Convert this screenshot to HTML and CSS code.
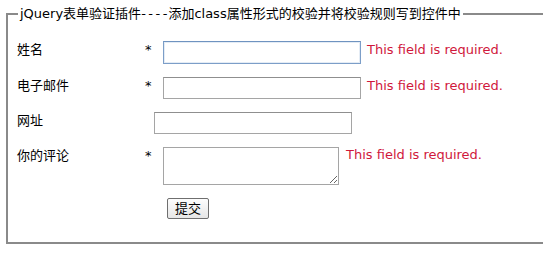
FILE: index.html
```html
<!DOCTYPE html>
<html lang="zh">
<head>
<meta charset="utf-8">
<title>jQuery表单验证插件</title>
<link rel="stylesheet" href="styles.css">
</head>
<body>
<form class="form">
  <fieldset class="box">
    <legend class="box-title">jQuery表单验证插件<span class="dash">----</span>添加class属性形式的校验并将校验规则写到控件中</legend>
    <div class="row">
      <label class="label">姓名</label>
      <em class="star">*</em>
      <input class="field field-focus" type="text">
      <span class="error">This field is required.</span>
    </div>
    <div class="row">
      <label class="label">电子邮件</label>
      <em class="star">*</em>
      <input class="field" type="text">
      <span class="error">This field is required.</span>
    </div>
    <div class="row">
      <label class="label">网址</label>
      <input class="field" type="text">
    </div>
    <div class="row">
      <label class="label">你的评论</label>
      <em class="star">*</em>
      <textarea class="area"></textarea>
      <span class="error">This field is required.</span>
    </div>
    <div class="row row-submit">
      <button class="submit" type="button">提交</button>
    </div>
  </fieldset>
</form>
</body>
</html>
```

FILE: styles.css
```css
html, body {
  margin: 0;
  padding: 0;
  background: #ffffff;
  overflow: hidden;
}

body {
  font-family: "DejaVu Sans", "Noto Sans CJK SC", sans-serif;
  font-size: 13px;
  line-height: 16px;
  color: #000000;
}

.form {
  margin: 0;
  padding: 6px 0 0 6px;
}

.box {
  margin: 0;
  padding: 19px 10px 23px 9px;
  border: 2px solid #8a8a8a;
  border-right: none;
  min-width: 0;
}

.box-title {
  padding: 0 2px;
  margin-left: 1px;
  line-height: 16px;
  font-size: 13px;
  white-space: nowrap;
}

.dash {
  letter-spacing: 2.5px;
  margin-right: -1.5px;
}

.row {
  display: flex;
  align-items: flex-start;
  margin-bottom: 13px;
}

.label,
.star,
.error {
  margin-top: 1px;
  line-height: 16px;
}

.label {
  width: 127px;
  flex: none;
}

.star {
  width: 9px;
  flex: none;
  font-style: normal;
  padding-left: 1px;
  box-sizing: border-box;
}

.field {
  box-sizing: border-box;
  width: 198px;
  height: 22px;
  margin: 0 0 0 10px;
  padding: 1px 2px;
  border: 1px solid #a5a5a5;
  border-top-color: #8f8f8f;
  background: #ffffff;
  font: inherit;
  outline: none;
}

.field-focus {
  height: 23px;
  border: 1px solid #7c9ec8;
  border-top-color: #6f93c0;
  box-shadow: inset 0 0 0 1px #e4ecf5;
}

.area {
  box-sizing: border-box;
  width: 176px;
  height: 38px;
  margin: 0 0 0 10px;
  padding: 1px 2px;
  border: 1px solid #a5a5a5;
  font: inherit;
  outline: none;
}

.error {
  margin-left: 6px;
  color: #d0183c;
  white-space: nowrap;
}

.area + .error {
  margin-left: 7px;
  margin-top: 0;
}

.row-submit {
  margin: 0;
  padding-left: 150px;
}

.submit {
  box-sizing: border-box;
  width: 42px;
  height: 21px;
  padding: 0;
  border: 1px solid #6f6f6f;
  border-radius: 2px;
  background: linear-gradient(#fdfdfd, #e6e6e6);
  font: inherit;
  line-height: 17px;
  color: #000000;
}
```
